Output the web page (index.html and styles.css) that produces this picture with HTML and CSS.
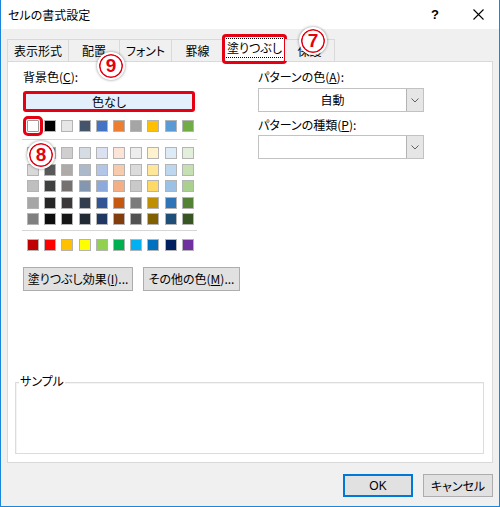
FILE: index.html
```html
<!DOCTYPE html>
<html lang="ja">
<head>
<meta charset="utf-8">
<title>セルの書式設定</title>
<link rel="stylesheet" href="styles.css">
</head>
<body>
<div class="window">
  <div class="titlebar">
    <span class="title">セルの書式設定</span>
    <span class="help">?</span>
    <span class="close"><svg width="11" height="11" viewBox="0 0 11 11"><path d="M0.5 0.5L10.5 10.5M10.5 0.5L0.5 10.5" stroke="#000" stroke-width="1.1" fill="none"/></svg></span>
  </div>
  <div class="body">
    <div class="tabs">
      <div class="tab first w62">表示形式</div>
      <div class="tab w51">配置</div>
      <div class="tab w52">フォント</div>
      <div class="tab w52">罫線</div>
      <div class="tab sel"><span class="focus">塗りつぶし</span></div>
      <div class="tab w50">保護</div>
    </div>
    <div class="panel">
      <div class="top">
        <div class="left">
          <div class="label">背景色(<u>C</u>):</div>
          <div class="nocolor">色なし</div>
          <div class="swrow">
            <span class="sw picked" style="background:#FFFFFF"></span>
            <span class="sw" style="background:#000000"></span>
            <span class="sw" style="background:#E7E6E6"></span>
            <span class="sw" style="background:#44546A"></span>
            <span class="sw" style="background:#4472C4"></span>
            <span class="sw" style="background:#ED7D31"></span>
            <span class="sw" style="background:#A5A5A5"></span>
            <span class="sw" style="background:#FFC000"></span>
            <span class="sw" style="background:#5B9BD5"></span>
            <span class="sw" style="background:#70AD47"></span>
          </div>
          <div class="sep"></div>
          <div class="grid">
            <span class="sw" style="background:#F2F2F2"></span>
            <span class="sw" style="background:#808080"></span>
            <span class="sw" style="background:#D0CECE"></span>
            <span class="sw" style="background:#D6DCE4"></span>
            <span class="sw" style="background:#D9E1F2"></span>
            <span class="sw" style="background:#FCE4D6"></span>
            <span class="sw" style="background:#EDEDED"></span>
            <span class="sw" style="background:#FFF2CC"></span>
            <span class="sw" style="background:#DDEBF7"></span>
            <span class="sw" style="background:#E2EFDA"></span>

            <span class="sw" style="background:#D9D9D9"></span>
            <span class="sw" style="background:#595959"></span>
            <span class="sw" style="background:#AEAAAA"></span>
            <span class="sw" style="background:#ACB9CA"></span>
            <span class="sw" style="background:#B4C6E7"></span>
            <span class="sw" style="background:#F8CBAD"></span>
            <span class="sw" style="background:#DBDBDB"></span>
            <span class="sw" style="background:#FFE699"></span>
            <span class="sw" style="background:#BDD7EE"></span>
            <span class="sw" style="background:#C6E0B4"></span>

            <span class="sw" style="background:#BFBFBF"></span>
            <span class="sw" style="background:#404040"></span>
            <span class="sw" style="background:#757171"></span>
            <span class="sw" style="background:#8497B0"></span>
            <span class="sw" style="background:#8EA9DB"></span>
            <span class="sw" style="background:#F4B084"></span>
            <span class="sw" style="background:#C9C9C9"></span>
            <span class="sw" style="background:#FFD966"></span>
            <span class="sw" style="background:#9BC2E6"></span>
            <span class="sw" style="background:#A9D08E"></span>

            <span class="sw" style="background:#A6A6A6"></span>
            <span class="sw" style="background:#262626"></span>
            <span class="sw" style="background:#3A3838"></span>
            <span class="sw" style="background:#333F4F"></span>
            <span class="sw" style="background:#305496"></span>
            <span class="sw" style="background:#C65911"></span>
            <span class="sw" style="background:#7B7B7B"></span>
            <span class="sw" style="background:#BF8F00"></span>
            <span class="sw" style="background:#2F75B5"></span>
            <span class="sw" style="background:#548235"></span>

            <span class="sw" style="background:#808080"></span>
            <span class="sw" style="background:#0D0D0D"></span>
            <span class="sw" style="background:#161616"></span>
            <span class="sw" style="background:#222B35"></span>
            <span class="sw" style="background:#203764"></span>
            <span class="sw" style="background:#833C0C"></span>
            <span class="sw" style="background:#525252"></span>
            <span class="sw" style="background:#806000"></span>
            <span class="sw" style="background:#1F4E78"></span>
            <span class="sw" style="background:#375623"></span>
          </div>
          <div class="sep sep2"></div>
          <div class="swrow std">
            <span class="sw" style="background:#C00000"></span>
            <span class="sw" style="background:#FF0000"></span>
            <span class="sw" style="background:#FFC000"></span>
            <span class="sw" style="background:#FFFF00"></span>
            <span class="sw" style="background:#92D050"></span>
            <span class="sw" style="background:#00B050"></span>
            <span class="sw" style="background:#00B0F0"></span>
            <span class="sw" style="background:#0070C0"></span>
            <span class="sw" style="background:#002060"></span>
            <span class="sw" style="background:#7030A0"></span>
          </div>
          <div class="btnrow">
            <button class="btn b1">塗りつぶし効果(<u>I</u>)...</button>
            <button class="btn b2">その他の色(<u>M</u>)...</button>
          </div>
        </div>
        <div class="right">
          <div class="label">パターンの色(<u>A</u>):</div>
          <div class="select s1">
            <span class="val">自動</span>
            <span class="arrow"><svg width="8" height="5" viewBox="0 0 8 5"><path d="M0.5 0.5L4 4L7.5 0.5" stroke="#606060" stroke-width="1" fill="none"/></svg></span>
          </div>
          <div class="label l2">パターンの種類(<u>P</u>):</div>
          <div class="select s2">
            <span class="val"></span>
            <span class="arrow"><svg width="8" height="5" viewBox="0 0 8 5"><path d="M0.5 0.5L4 4L7.5 0.5" stroke="#606060" stroke-width="1" fill="none"/></svg></span>
          </div>
        </div>
      </div>
      <div class="sample"><span class="legend">サンプル</span></div>
    </div>
    <div class="footer">
      <button class="btn ok">OK</button>
      <button class="btn cancel">キャンセル</button>
    </div>
  </div>
  <div class="badge b7">7</div>
  <div class="badge b8">8</div>
  <div class="badge b9">9</div>
</div>
</body>
</html>
```

FILE: styles.css
```css
* {
  box-sizing: border-box;
}

html, body {
  margin: 0;
  padding: 0;
  background: #ffffff;
}

body {
  font-family: "Noto Sans CJK JP", "Noto Sans", sans-serif;
  font-size: 12px;
  color: #000000;
  font-feature-settings: "palt";
}

.window {
  position: relative;
  width: 500px;
  height: 507px;
  border: 1px solid #1b86d9;
  border-top: none;
  display: flex;
  flex-direction: column;
  background: #f0f0f0;
}

.titlebar {
  height: 29px;
  flex: none;
  background: #ffffff;
  display: flex;
  align-items: center;
}

.title {
  flex: 1;
  padding-left: 7px;
  font-size: 12px;
}

.help {
  width: 44px;
  text-align: center;
  font-family: "Liberation Sans", sans-serif;
  font-size: 13px;
  font-weight: bold;
}

.close {
  width: 42px;
  height: 29px;
  display: flex;
  align-items: center;
  justify-content: center;
}

.body {
  flex: 1;
  display: flex;
  flex-direction: column;
  padding: 7px 6px 9px 6px;
}

.tabs {
  display: flex;
  align-items: flex-end;
  height: 25px;
  flex: none;
  position: relative;
  z-index: 1;
}

.tab {
  height: 22px;
  border-top: 1px solid #d9d9d9;
  border-right: 1px solid #d9d9d9;
  background: #f0f0f0;
  display: flex;
  align-items: center;
  justify-content: center;
  line-height: 14px;
  padding-top: 1px;
  white-space: nowrap;
}

.tab.first {
  border-left: 1px solid #d9d9d9;
}

.w62 { width: 62px; }
.w51 { width: 51px; }
.w52 { width: 52px; }
.w50 { width: 50px; }

.tab.sel {
  width: 61px;
  height: 26px;
  margin-bottom: -1px;
  background: #ffffff;
  border-left: 1px solid #d9d9d9;
  outline: 3px solid #e50012;
  outline-offset: -1px;
  border-radius: 2px;
  padding-top: 0;
  padding-bottom: 3px;
}

.focus {
  border: 1px dotted #000000;
  padding: 2px 2px;
  line-height: 14px;
}

.panel {
  height: 402px;
  flex: none;
  background: #ffffff;
  border: 1px solid #d9d9d9;
  display: flex;
  flex-direction: column;
}

.top {
  display: flex;
  padding: 8px 0 0 15px;
}

.left {
  width: 235px;
  flex: none;
}

.right {
  width: 166px;
  flex: none;
}

.label {
  height: 14px;
  line-height: 14px;
  white-space: nowrap;
}

.label.l2 {
  margin-top: 6px;
}

.nocolor {
  margin-top: 7px;
  width: 172px;
  height: 21px;
  border: 3px solid #e50012;
  border-radius: 3px;
  background: #e3f0fb;
  display: flex;
  align-items: center;
  justify-content: center;
  line-height: 14px;
}

.swrow {
  margin-top: 8px;
  height: 12px;
  display: flex;
  gap: 5.2px;
  padding-left: 4px;
}

.swrow.std {
  margin-top: 8px;
}

.sw {
  display: block;
  width: 12px;
  height: 12px;
  border: 1px solid #b4b4b4;
  flex: none;
}

.sw.picked {
  border-color: #9a9a9a;
  outline: 3px solid #e50012;
  outline-offset: 1px;
  border-radius: 1px;
}

.sep {
  margin: 7px 0 0 -1px;
  width: 175px;
  height: 1px;
  background: #d6d6d6;
}

.sep.sep2 {
  margin-top: 5px;
}

.grid {
  margin-top: 7px;
  display: grid;
  grid-template-columns: repeat(10, 12px);
  column-gap: 5.2px;
  row-gap: 4.5px;
  padding-left: 4px;
}

.btnrow {
  margin-top: 16px;
  display: flex;
  gap: 10px;
}

.btn {
  font-family: "Noto Sans CJK JP", "Noto Sans", sans-serif;
  font-feature-settings: "palt";
  font-size: 12px;
  color: #000000;
  background: #e1e1e1;
  border: 1px solid #adadad;
  padding: 0;
  margin: 0;
  line-height: 14px;
  white-space: nowrap;
}

.b1 {
  width: 110px;
  height: 24px;
}

.b2 {
  width: 97px;
  height: 24px;
}

.select {
  width: 166px;
  height: 24px;
  border: 1px solid #c2c2c2;
  background: #ffffff;
  display: flex;
}

.select.s1 {
  margin-top: 4px;
}

.select.s2 {
  margin-top: 3px;
}

.val {
  flex: 1;
  display: flex;
  align-items: center;
  justify-content: center;
  line-height: 14px;
}

.arrow {
  width: 17px;
  background: #e6e6e6;
  border-left: 1px solid #b4b4b4;
  display: flex;
  align-items: center;
  justify-content: center;
}

.sample {
  margin: auto 8px 8px 7px;
  height: 72px;
  border: 1px solid #dcdcdc;
  box-shadow: inset 1px 1px 0 #f4f4f4;
}

.legend {
  display: inline-block;
  margin: -9px 0 0 3px;
  padding: 0 1px;
  background: #ffffff;
  line-height: 14px;
  vertical-align: top;
}

.footer {
  margin-top: 11px;
  display: flex;
  justify-content: flex-end;
  gap: 10px;
}

.ok,
.cancel {
  width: 70px;
  height: 23px;
}

.ok {
  border: 1px solid #0078d7;
  box-shadow: inset 0 0 0 1px #0078d7;
  font-family: "Liberation Sans", sans-serif;
}

.badge {
  position: absolute;
  width: 28px;
  height: 28px;
  border-radius: 50%;
  background: #ffffff;
  border: 2px solid #ffffff;
  box-shadow: inset 0 0 0 1.5px #e50012, 0 0 3px rgba(0, 0, 0, 0.45);
  display: flex;
  align-items: center;
  justify-content: center;
  font-family: "Liberation Sans", sans-serif;
  font-weight: bold;
  font-size: 19px;
  color: #e50012;
  z-index: 5;
}

.b7 { left: 298px; top: 27px; }
.b8 { left: 26px; top: 141px; }
.b9 { left: 96px; top: 52px; }
```
